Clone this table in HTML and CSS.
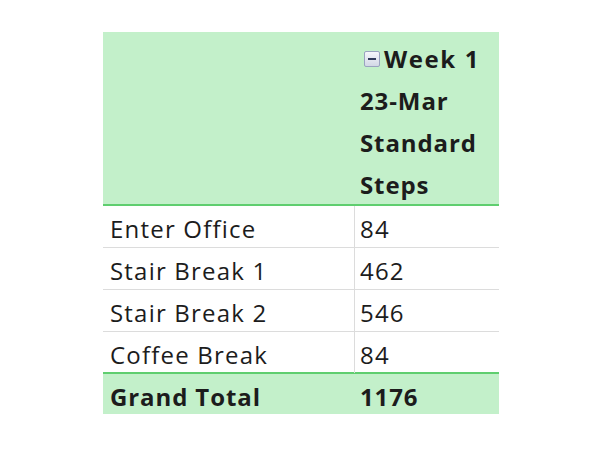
FILE: index.html
```html
<!DOCTYPE html>
<html>
<head>
<meta charset="utf-8">
<link rel="stylesheet" href="styles.css">
</head>
<body>
<div class="pivot">
  <div class="head">
    <div class="hcell"></div>
    <div class="hcell hval">
      <div class="hline"><span class="toggle"><span class="bar"></span></span><span class="week">Week 1</span></div>
      <div class="hline">23-Mar</div>
      <div class="hline">Standard</div>
      <div class="hline">Steps</div>
    </div>
  </div>
  <div class="row"><div class="lab">Enter Office</div><div class="val">84</div></div>
  <div class="row"><div class="lab">Stair Break 1</div><div class="val">462</div></div>
  <div class="row"><div class="lab">Stair Break 2</div><div class="val">546</div></div>
  <div class="row last"><div class="lab">Coffee Break</div><div class="val">84</div></div>
  <div class="total"><div class="lab">Grand Total</div><div class="val">1176</div></div>
</div>
</body>
</html>
```
FILE: styles.css
```css
html, body { margin: 0; padding: 0; background: #fff; }
body {
  font-family: "Open Sans", "Liberation Sans", sans-serif;
  color: #1c1c1c;
  font-size: 24px;
  letter-spacing: 1.2px;
  padding: 32px 0 0 103px;
}
.pivot { width: 396px; }
.head {
  display: grid;
  grid-template-columns: 252px 144px;
  background: #c3f0ca;
  border-bottom: 2px solid #5fce6f;
  height: 172px;
}
.hval { padding: 6px 0 0 5px; font-weight: 700; letter-spacing: 0.9px; }
.hline { height: 42px; line-height: 42px; white-space: nowrap; display: flex; align-items: center; }
.week { letter-spacing: 1.6px; }
.toggle {
  width: 16px; height: 16px; border: 1px solid #9aa3c0; border-radius: 2px;
  background: linear-gradient(#f6f7fb, #d3d8e6);
  display: inline-flex; align-items: center; justify-content: center;
  margin: 0 4px 0 4px; box-sizing: border-box;
}
.bar { width: 8px; height: 2px; background: #333c5c; }
.row {
  display: grid;
  grid-template-columns: 252px 144px;
  height: 42px;
  border-bottom: 1px solid #dcdcdc;
  box-sizing: border-box;
}
.row.last { border-bottom: 2px solid #5fce6f; }
.row .lab { border-right: 1px solid #dcdcdc; }
.lab, .val { line-height: 42px; white-space: nowrap; padding-top: 2px; box-sizing: border-box; }
.row .lab, .row .val { height: 41px; }
.lab { padding-left: 7px; }
.val { padding-left: 5px; }
.total {
  display: grid;
  grid-template-columns: 252px 144px;
  height: 40px;
  background: #c3f0ca;
  font-weight: 700;
  letter-spacing: 0.9px;
}
.total .lab, .total .val { line-height: 40px; padding-top: 3px; }
```
